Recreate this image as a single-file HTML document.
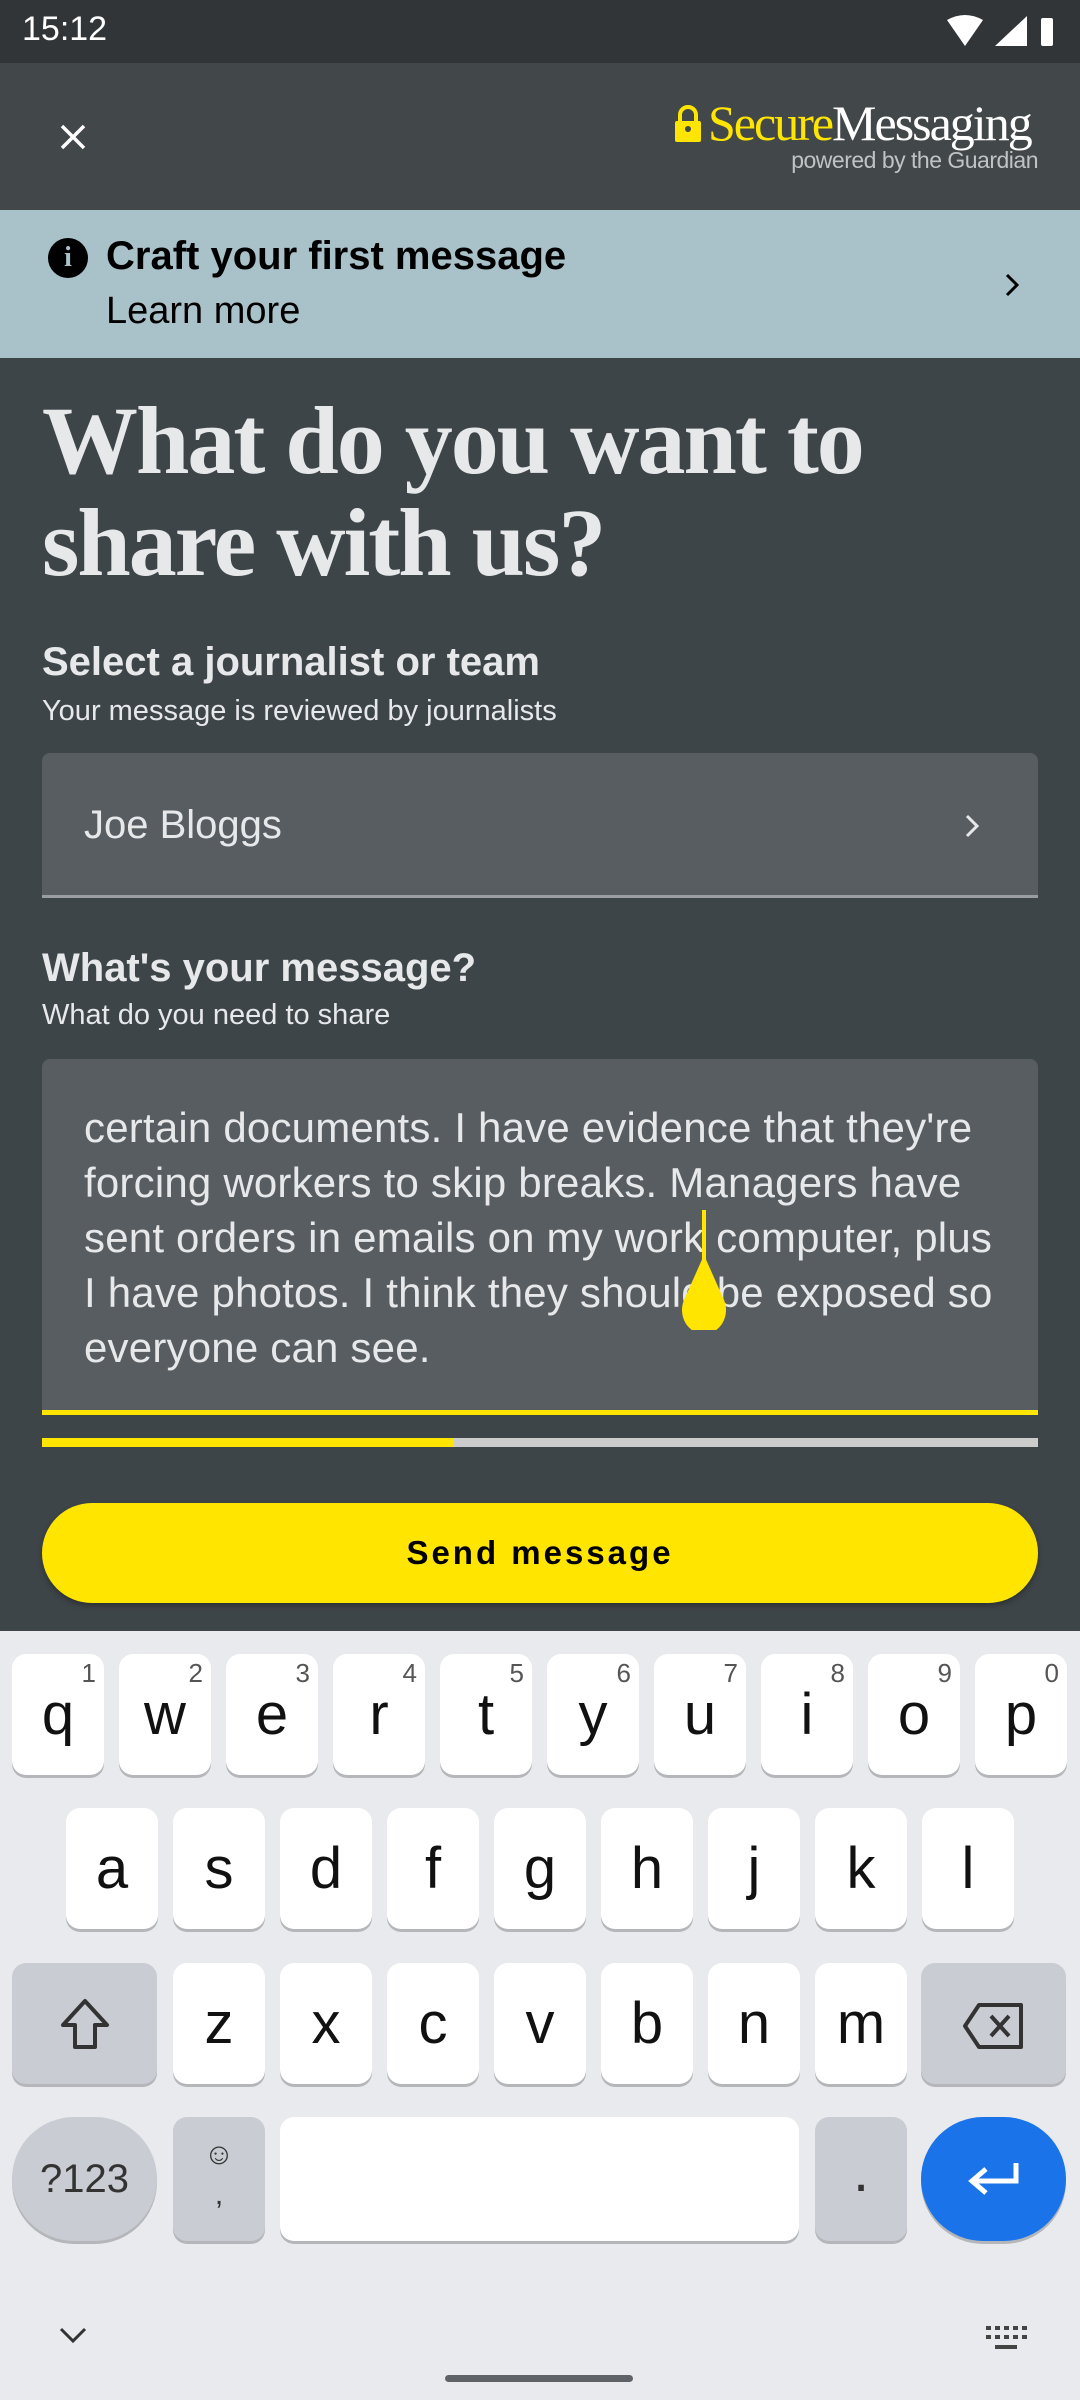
<!DOCTYPE html>
<html><head><meta charset="utf-8"><style>
*{margin:0;padding:0;box-sizing:border-box}
body{width:1080px;height:2400px;position:relative;overflow:hidden;background:#3e4548;font-family:"Liberation Sans",sans-serif;color:#e6e8ea}
.a{position:absolute}
.k{position:absolute;width:92px;height:121px;background:#fff;border-radius:14px;box-shadow:0 3px 0 #b4b6ba;font-size:58px;color:#111;text-align:center;line-height:121px}
.k sup{position:absolute;right:8px;top:6px;font-size:26px;line-height:26px;color:#555}
.g{background:#c9ccd2}
</style></head><body>
<div class="a" style="left:0;top:0;width:1080px;height:63px;background:#313538"></div>
<div class="a" style="left:22px;top:10px;font-size:34px;color:#fff">15:12</div>
<svg class="a" style="left:945px;top:14px" width="110" height="36" viewBox="0 0 110 36"><path d="M2 6 Q20 -4 38 6 L20 32Z" fill="#fff"/><path d="M50 32 L82 32 L82 2Z" fill="#fff"/><rect x="96" y="4" width="12" height="28" rx="2" fill="#fff"/></svg>
<div class="a" style="left:0;top:63px;width:1080px;height:147px;background:#42474a"></div>
<svg class="a" style="left:58px;top:122px" width="30" height="30" viewBox="0 0 30 30"><path d="M4 4L26 26M26 4L4 26" stroke="#fff" stroke-width="3.5"/></svg>
<svg class="a" style="left:674px;top:104px" width="28" height="40" viewBox="0 0 28 40"><path d="M6 18V11a8 8 0 0 1 16 0v7" stroke="#ffe500" stroke-width="4" fill="none"/><rect x="1" y="17" width="26" height="21" rx="2" fill="#ffe500"/><circle cx="14" cy="25" r="3" fill="#42474a"/></svg>
<div class="a" style="left:708px;top:94px;font-family:'Liberation Serif',serif;font-size:50px;letter-spacing:-2px;white-space:nowrap"><span style="color:#ffe500">Secure</span><span style="color:#fff">Messaging</span></div>
<div class="a" style="left:740px;top:147px;font-size:23px;color:#bfc3c5;width:298px;text-align:right;letter-spacing:-0.5px">powered by the Guardian</div>
<div class="a" style="left:0;top:210px;width:1080px;height:148px;background:#a9c1c8"></div>
<div class="a" style="left:48px;top:238px;width:40px;height:40px;border-radius:50%;background:#000;color:#a9c1c8;font-weight:bold;font-size:28px;text-align:center;line-height:40px;font-family:'Liberation Serif',serif">i</div>
<div class="a" style="left:106px;top:234px;font-size:40px;font-weight:bold;color:#000">Craft your first message</div>
<div class="a" style="left:106px;top:290px;font-size:38px;color:#000">Learn more</div>
<svg class="a" style="left:1003px;top:273px" width="18" height="24" viewBox="0 0 18 24"><path d="M4 2L14 12L4 22" stroke="#000" stroke-width="3" fill="none"/></svg>
<div class="a" style="left:42px;top:390px;font-family:'Liberation Serif',serif;font-weight:bold;font-size:96px;line-height:102px;letter-spacing:-2px;color:#e6e8ea;white-space:nowrap">What do you want to<br>share with us?</div>
<div class="a" style="left:42px;top:640px;font-size:40px;font-weight:bold">Select a journalist or team</div>
<div class="a" style="left:42px;top:695px;font-size:29px">Your message is reviewed by journalists</div>
<div class="a" style="left:42px;top:753px;width:996px;height:145px;background:#585d61;border-radius:8px 8px 0 0;border-bottom:3px solid #9a9ea2"></div>
<div class="a" style="left:84px;top:803px;font-size:40px">Joe Bloggs</div>
<svg class="a" style="left:964px;top:814px" width="16" height="24" viewBox="0 0 16 24"><path d="M3 2L13 12L3 22" stroke="#e6e8ea" stroke-width="3" fill="none"/></svg>
<div class="a" style="left:42px;top:946px;font-size:40px;font-weight:bold">What's your message?</div>
<div class="a" style="left:42px;top:999px;font-size:29px">What do you need to share</div>
<div class="a" style="left:42px;top:1059px;width:996px;height:356px;background:#585d61;border-radius:8px 8px 0 0;border-bottom:5px solid #ffe500"></div>
<div class="a" style="left:84px;top:1100px;font-size:42px;line-height:55px;width:940px;white-space:nowrap;letter-spacing:0.2px">certain documents. I have evidence that they're<br>forcing workers to skip breaks. Managers have<br>sent orders in emails on my work computer, plus<br>I have photos. I think they should be exposed so<br>everyone can see.</div>
<div class="a" style="left:702px;top:1210px;width:4px;height:58px;background:#ffe500"></div>
<svg class="a" style="left:679px;top:1255px" width="50" height="75" viewBox="0 0 50 75"><path d="M25 0 L45 45 A22 24 0 1 1 5 45Z" fill="#ffe500"/></svg>
<div class="a" style="left:42px;top:1438px;width:996px;height:9px;background:#ccc"></div>
<div class="a" style="left:42px;top:1438px;width:412px;height:9px;background:#ffe500"></div>
<div class="a" style="left:42px;top:1503px;width:996px;height:100px;background:#ffe500;border-radius:50px;text-align:center;line-height:100px;font-size:33px;font-weight:bold;color:#000;letter-spacing:3px;box-shadow:0 3px 6px rgba(0,0,0,.3)">Send message</div>
<div class="a" style="left:0;top:1631px;width:1080px;height:769px;background:#e8eaed"></div>
<div class="k" style="left:12px;top:1654px">q<sup>1</sup></div>
<div class="k" style="left:119px;top:1654px">w<sup>2</sup></div>
<div class="k" style="left:226px;top:1654px">e<sup>3</sup></div>
<div class="k" style="left:333px;top:1654px">r<sup>4</sup></div>
<div class="k" style="left:440px;top:1654px">t<sup>5</sup></div>
<div class="k" style="left:547px;top:1654px">y<sup>6</sup></div>
<div class="k" style="left:654px;top:1654px">u<sup>7</sup></div>
<div class="k" style="left:761px;top:1654px">i<sup>8</sup></div>
<div class="k" style="left:868px;top:1654px">o<sup>9</sup></div>
<div class="k" style="left:975px;top:1654px">p<sup>0</sup></div>
<div class="k" style="left:66px;top:1808px">a</div>
<div class="k" style="left:173px;top:1808px">s</div>
<div class="k" style="left:280px;top:1808px">d</div>
<div class="k" style="left:387px;top:1808px">f</div>
<div class="k" style="left:494px;top:1808px">g</div>
<div class="k" style="left:601px;top:1808px">h</div>
<div class="k" style="left:708px;top:1808px">j</div>
<div class="k" style="left:815px;top:1808px">k</div>
<div class="k" style="left:922px;top:1808px">l</div>
<div class="k g" style="left:12px;top:1963px;width:145px"><svg style="margin-top:32px" width="60" height="60" viewBox="0 0 60 60"><path d="M30 6L52 30H40V52H20V30H8Z" stroke="#333" stroke-width="4" fill="none" stroke-linejoin="round"/></svg></div>
<div class="k" style="left:173px;top:1963px">z</div>
<div class="k" style="left:280px;top:1963px">x</div>
<div class="k" style="left:387px;top:1963px">c</div>
<div class="k" style="left:494px;top:1963px">v</div>
<div class="k" style="left:601px;top:1963px">b</div>
<div class="k" style="left:708px;top:1963px">n</div>
<div class="k" style="left:815px;top:1963px">m</div>
<div class="k g" style="left:921px;top:1963px;width:145px"><svg style="margin-top:38px" width="66" height="50" viewBox="0 0 66 50"><path d="M18 4H60V46H18L4 25Z" stroke="#333" stroke-width="4" fill="none" stroke-linejoin="round"/><path d="M30 15L48 35M48 15L30 35" stroke="#333" stroke-width="4"/></svg></div>
<div class="k g" style="left:12px;top:2117px;width:145px;height:124px;border-radius:62px;font-size:40px;color:#333;line-height:124px">?123</div>
<div class="k g" style="left:173px;top:2117px;height:124px;font-size:30px;line-height:40px;color:#333"><div style="margin-top:18px">☺</div><div>,</div></div>
<div class="k" style="left:280px;top:2117px;width:519px;height:124px"></div>
<div class="k g" style="left:815px;top:2117px;height:124px;line-height:110px;color:#333">.</div>
<div class="k" style="left:921px;top:2117px;width:145px;height:124px;border-radius:62px;background:#1a73e8"><svg style="margin-top:42px" width="56" height="40" viewBox="0 0 56 40"><path d="M50 4V22H8M20 10L6 22L20 34" stroke="#fff" stroke-width="5" fill="none"/></svg></div>
<svg class="a" style="left:58px;top:2326px" width="30" height="20" viewBox="0 0 30 20"><path d="M3 3L15 15L27 3" stroke="#333" stroke-width="3" fill="none"/></svg>
<svg class="a" style="left:984px;top:2324px" width="44" height="30" viewBox="0 0 44 30"><g fill="#444"><rect x="2" y="2" width="5" height="4"/><rect x="11" y="2" width="5" height="4"/><rect x="20" y="2" width="5" height="4"/><rect x="29" y="2" width="5" height="4"/><rect x="38" y="2" width="5" height="4"/><rect x="2" y="11" width="5" height="4"/><rect x="11" y="11" width="5" height="4"/><rect x="20" y="11" width="5" height="4"/><rect x="29" y="11" width="5" height="4"/><rect x="38" y="11" width="5" height="4"/><rect x="11" y="21" width="22" height="4"/></g></svg>
<div class="a" style="left:445px;top:2375px;width:188px;height:7px;border-radius:4px;background:#5f6368"></div>
</body></html>
